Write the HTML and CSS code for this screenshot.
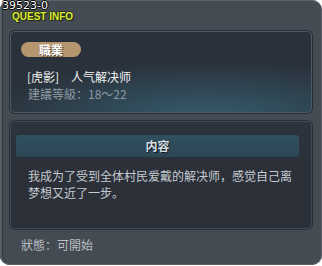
FILE: index.html
```html
<!DOCTYPE html>
<html lang="zh">
<head>
    <meta charset="UTF-8">
    <meta name="viewport" content="width=device-width, initial-scale=1.0">
    <title>Quest Info</title>
    <link rel="stylesheet" href="styles.css">
</head>
<body>
    <div class="window">
        <div class="head">
            <div class="quest-id">39523-0</div>
            <div class="quest-title">QUEST INFO</div>
        </div>

        <section class="panel info">
            <span class="badge">職業</span>
            <p class="name">[虎影]　人气解决师</p>
            <p class="level">建議等級：18～22</p>
        </section>

        <section class="panel content">
            <div class="bar">内容</div>
            <p class="desc">我成为了受到全体村民爱戴的解决师，感觉自己离梦想又近了一步。</p>
        </section>

        <p class="status">狀態：可開始</p>
    </div>
</body>
</html>
```

FILE: styles.css
```css
* {
    margin: 0;
    padding: 0;
    box-sizing: border-box;
}

body {
    background: #ffffff;
    font-family: "Noto Sans CJK SC", "Noto Sans", sans-serif;
    font-size: 12px;
}

.window {
    width: 322px;
    height: 265px;
    background: #444b53;
    border-radius: 10px;
    box-shadow: inset 0 0 0 1px #5a626b, inset 2px 0 0 0 #50575f, inset 3px 0 0 0 #2f353b;
}

/* Header */
.head {
    height: 31px;
}

.quest-id {
    height: 12px;
    padding-left: 2px;
    font-family: "DejaVu Sans", sans-serif;
    font-size: 11px;
    line-height: 11px;
    color: #ffffff;
    text-shadow: 1px 0 0 #000, -1px 0 0 #000, 0 1px 0 #000, 0 -1px 0 #000;
}

.quest-title {
    padding-left: 12px;
    font-family: "Liberation Sans", sans-serif;
    font-weight: bold;
    font-size: 10px;
    line-height: 9px;
    color: #dcee3a;
    text-shadow: 1px 1px 0 #1c2208, -1px 0 0 #2a3010, 0 -1px 0 #2a3010;
}

/* Panels */
.panel {
    margin: 0 10px;
    width: 302px;
    border: 1px solid #48596a;
    border-radius: 5px;
    box-shadow: 0 0 0 1px #2a2f35;
}

.info {
    height: 82px;
    padding: 10px 0 0 10px;
    background:
        radial-gradient(ellipse 75% 70% at 65% 105%, #355b6c 0%, rgba(53, 91, 108, 0) 100%),
        linear-gradient(#2a313b, #29313a);
}

.badge {
    display: block;
    width: 60px;
    height: 15px;
    line-height: 15px;
    border-radius: 8px;
    background: #b5966f;
    color: #ffffff;
    font-weight: bold;
    text-align: center;
    text-shadow: 1px 1px 0 #5a4630;
}

.name {
    margin-top: 11px;
    padding-left: 6px;
    line-height: 18px;
    color: #f2f2f2;
}

.level {
    padding-left: 7px;
    line-height: 16px;
    color: #8e99a2;
}

.content {
    height: 108px;
    margin-top: 8px;
    padding: 13px 0 0 5px;
    background: linear-gradient(#2c343e, #2b3039 40%, #2a2f38);
    border-color: #3c4956;
}

.bar {
    width: 283px;
    height: 22px;
    line-height: 22px;
    border-radius: 3px;
    background: linear-gradient(#31505f, #2c4655);
    color: #d6dde0;
    font-weight: bold;
    text-align: center;
    text-shadow: 1px 1px 0 #121a20;
}

.desc {
    width: 270px;
    margin: 10px 0 0 12px;
    line-height: 17px;
    color: #c5cacf;
}

.status {
    margin: 8px 0 0 21px;
    line-height: 16px;
    color: #b9bec3;
}
```
